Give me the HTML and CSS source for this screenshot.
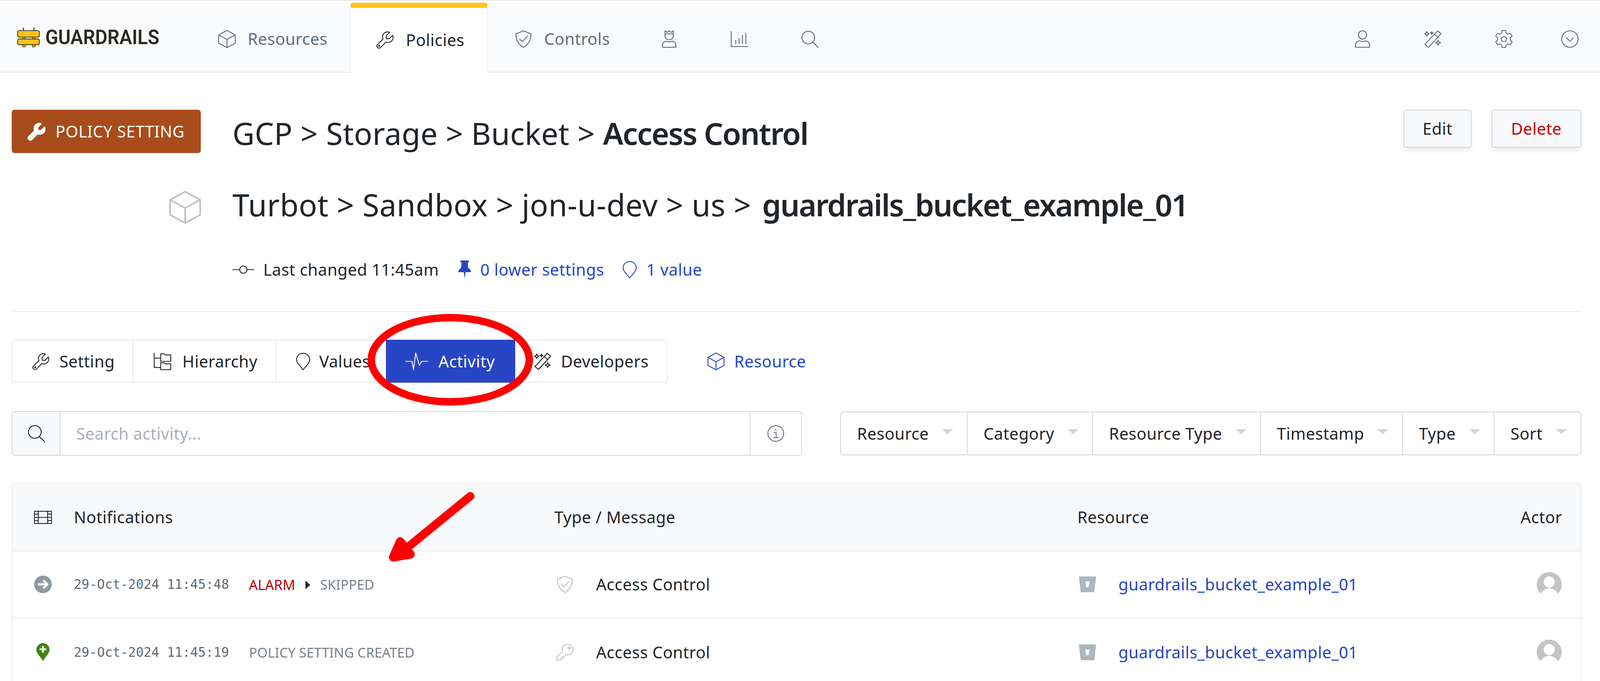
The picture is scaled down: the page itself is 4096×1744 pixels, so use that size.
FILE: index.html
```html
<!DOCTYPE html>
<html lang="en">
<head>
<meta charset="utf-8">
<title>Guardrails - Policy Setting</title>
<link rel="stylesheet" href="styles.css">
</head>
<body>
<svg class="defs" aria-hidden="true">
  <symbol id="i-cube" viewBox="0 0 48 48"><path d="M24 1 46 13V35L24 47 2 35V13ZM2 13 24 25 46 13M24 25V47"/></symbol>
  <symbol id="i-wrench" viewBox="0 0 48 48"><path d="M44 12 35 21H27V13L36 4C29 1 21 4 18 11C16.5 15 17 19 18 22L4 36C1 39 1 42 3.5 44.5C6 47 9.5 47 12 44.5L26 30C29 31 33 31.5 37 30C44 27 47 19 44 12Z"/><circle cx="8" cy="40" r="1.5"/></symbol>
  <symbol id="i-shield" viewBox="0 0 48 48"><path d="M24 2 44 10C44 24 40 38 24 46C8 38 4 24 4 10ZM14 24 21 31 35 16"/></symbol>
  <symbol id="i-crown" viewBox="0 0 48 48"><path d="M13 2 18.500 6 24 2 29.500 6 35 2V16C35 22 30 26 24 26C18 26 13 22 13 16ZM13 10H35M6 46V41C6 34 11 30 16 30C20 32 28 32 32 30C37 30 42 34 42 41V46Z"/></symbol>
  <symbol id="i-chart" viewBox="0 0 48 48"><path d="M2 4V44H47M14 28V37M23 22V37M32 14V37M41 8V37"/></symbol>
  <symbol id="i-search" viewBox="0 0 48 48"><circle cx="20" cy="20" r="17"/><path d="M32 32 46 46"/></symbol>
  <symbol id="i-user" viewBox="0 0 48 48"><circle cx="24" cy="13" r="11"/><path d="M5 46V41C5 33 11 29 17 29C21 31 27 31 31 29C37 29 43 33 43 41V46Z"/></symbol>
  <symbol id="i-wand" viewBox="0 0 48 48"><path d="M37 2 46 10 13 46 3 38ZM29 11 38 20M8 4 10 8 14 10 10 12 8 16 6 12 2 10 6 8ZM21 4 22 7 25 8 22 9 21 12 20 9 17 8 20 7ZM38 27 40 32 45 34 40 36 38 41 36 36 31 34 36 32Z"/></symbol>
  <symbol id="i-gear" viewBox="0 0 48 48"><path d="M19.200 1.500H28.800L29.800 8 34.900 11 41.100 8.600 45.900 16.900 40.700 21V27L45.900 31.100 41.100 39.400 34.900 37 29.800 40 28.800 46.500H19.200L18.200 40 13.100 37 6.900 39.400 2.100 31.100 7.300 27V21L2.100 16.900 6.900 8.600 13.100 11 18.200 8Z"/><circle cx="24" cy="24" r="7"/></symbol>
  <symbol id="i-chevron" viewBox="0 0 48 48"><circle cx="24" cy="24" r="22"/><path d="M15 21 24 30 33 21"/></symbol>
  <symbol id="i-commit" viewBox="0 0 60 48"><circle cx="30" cy="24" r="10"/><path d="M0 24H20M40 24H60"/></symbol>
  <symbol id="i-marker" viewBox="0 0 40 48"><path d="M20 2C9 2 2 10 2 19C2 29 14 38 20 47C26 38 38 29 38 19C38 10 31 2 20 2Z"/></symbol>
  <symbol id="i-tree" viewBox="0 0 50 48"><path d="M2 1V41H20M2 15H20M20 3H30L33 6H48V24H20ZM20 28H30L33 31H48V47H20Z"/></symbol>
  <symbol id="i-pulse" viewBox="0 0 62 48"><path d="M0 24H18L22 47 28 1 38 35 44 24H62"/></symbol>
  <symbol id="i-info" viewBox="0 0 48 48"><circle cx="24" cy="24" r="22"/><path d="M19 21H25V36M18 36H31M24 12V15"/></symbol>
  <symbol id="i-film" viewBox="0 0 50 36"><path d="M1 1H49V35H1ZM12 1V35M38 1V35M12 18H38M1 9H12M1 18H12M1 27H12M38 9H49M38 18H49M38 27H49"/></symbol>
  <symbol id="i-key" viewBox="0 0 50 48"><path d="M33 2C25 2 18 8 18 16C18 18 18.500 20 19 21L3 37V46H14V41H19V36H24L29 30C30 31 32 31 33 31C42 31 48 24 48 16C48 8 41 2 33 2Z"/><circle cx="37" cy="12" r="3"/></symbol>
  <symbol id="i-bucket" viewBox="0 0 48 44"><path d="M0 0H48L43 44H5ZM18 14 20 30H27L30 14Z" fill-rule="evenodd"/></symbol>
  <symbol id="i-avatar" viewBox="0 0 70 68"><circle cx="35" cy="34" r="34" class="av-bg"/><circle cx="35" cy="27" r="15" class="av-fg"/><ellipse cx="35" cy="68" rx="25" ry="24" class="av-fg"/></symbol>
</svg>

<header class="topbar">
  <nav class="nav">
    <a class="brand">
      <svg class="brand-mark" viewBox="0 0 62 54"><path class="bm-line" d="M16 0 18 8M47 0 45 8"/><rect class="bm-post" x="15" y="26" width="7" height="27"/><rect class="bm-post" x="42" y="26" width="7" height="27"/><rect class="bm-bar" x="1" y="8" width="60" height="18" rx="4"/><rect class="bm-bar" x="1" y="31" width="60" height="16" rx="4"/></svg>
      <span class="brand-name">GUARDRAILS</span>
    </a>
    <a class="nav-tab tab-res"><svg class="ico i-nav"><use href="#i-cube"/></svg>Resources</a>
    <a class="nav-tab tab-pol is-active"><svg class="ico i-nav i-dark"><use href="#i-wrench"/></svg>Policies</a>
    <a class="nav-tab tab-con"><svg class="ico i-nav"><use href="#i-shield"/></svg>Controls</a>
    <a class="nav-icon"><svg class="ico i-nav"><use href="#i-crown"/></svg></a>
    <a class="nav-icon"><svg class="ico i-nav"><use href="#i-chart"/></svg></a>
    <a class="nav-icon"><svg class="ico i-nav"><use href="#i-search"/></svg></a>
    <div class="nav-right">
      <svg class="ico i-nav"><use href="#i-user"/></svg>
      <svg class="ico i-nav nudge-wand"><use href="#i-wand"/></svg>
      <svg class="ico i-nav nudge-gear"><use href="#i-gear"/></svg>
      <svg class="ico i-nav nudge-chev"><use href="#i-chevron"/></svg>
    </div>
  </nav>
</header>

<main class="main">
  <section class="head-row">
    <div class="badge"><svg class="ico i-badge"><use href="#i-wrench"/></svg>POLICY SETTING</div>
    <h1 class="title">GCP &gt; Storage &gt; Bucket &gt; <b>Access Control</b></h1>
    <div class="actions">
      <button class="btn btn-edit">Edit</button>
      <button class="btn btn-del">Delete</button>
    </div>
  </section>
  <section class="res-row">
    <svg class="ico i-cube-lg"><use href="#i-cube"/></svg>
    <h1 class="title">Turbot &gt; Sandbox &gt; jon-u-dev &gt; us &gt; <b>guardrails_bucket_example_01</b></h1>
  </section>
  <section class="meta-row">
    <span class="meta"><svg class="ico i-commit"><use href="#i-commit"/></svg>Last changed 11:45am</span>
    <a class="meta link"><svg class="i-pin" viewBox="0 0 35 49"><path d="M6 0H29V5H26L27 20C31 23 35 27 35 32H20L18 49 15 32H0C0 27 4 23 8 20L9 5H6Z"/></svg>0 lower settings</a>
    <a class="meta link"><svg class="ico i-mark-blue"><use href="#i-marker"/></svg>1 value</a>
  </section>
  <hr class="rule">
  <section class="tabs-row">
    <div class="tabs">
      <a class="tab t-set"><svg class="ico i-tab"><use href="#i-wrench"/></svg>Setting</a>
      <a class="tab t-hier"><svg class="ico i-tab"><use href="#i-tree"/></svg>Hierarchy</a>
      <a class="tab t-val"><svg class="ico i-tab-m"><use href="#i-marker"/></svg>Values</a>
      <a class="tab t-act is-on"><svg class="ico i-tab-w"><use href="#i-pulse"/></svg>Activity</a>
      <a class="tab t-dev"><svg class="ico i-tab"><use href="#i-wand"/></svg>Developers</a>
    </div>
    <a class="res-link"><svg class="ico i-tab i-blue"><use href="#i-cube"/></svg>Resource</a>
  </section>
  <section class="filter-row">
    <div class="search">
      <span class="search-pre"><svg class="ico i-s"><use href="#i-search"/></svg></span>
      <input class="search-input" placeholder="Search activity...">
      <span class="search-post"><svg class="ico i-info"><use href="#i-info"/></svg></span>
    </div>
    <div class="filters">
      <span class="filter">Resource<i class="caret"></i></span>
      <span class="filter">Category<i class="caret"></i></span>
      <span class="filter">Resource Type<i class="caret"></i></span>
      <span class="filter">Timestamp<i class="caret"></i></span>
      <span class="filter">Type<i class="caret"></i></span>
      <span class="filter">Sort<i class="caret"></i></span>
    </div>
  </section>
  <section class="table">
    <div class="row row-head">
      <div class="cell"><svg class="ico i-film"><use href="#i-film"/></svg>Notifications</div>
      <div class="cell">Type / Message</div>
      <div class="cell">Resource</div>
      <div class="cell cell-end">Actor</div>
    </div>
    <div class="row">
      <div class="cell">
        <svg class="i-state" viewBox="0 0 48 48"><circle cx="24" cy="24" r="24" class="st-gray"/><path class="st-arrow" d="M10 24H35M25 13 36 24 25 35"/></svg>
        <span class="stamp">29-Oct-2024 11:45:48</span>
        <span class="status st-alarm">ALARM</span><i class="tri"></i><span class="status">SKIPPED</span>
      </div>
      <div class="cell"><svg class="ico i-type"><use href="#i-shield"/></svg><span>Access Control</span></div>
      <div class="cell"><svg class="i-bucket"><use href="#i-bucket"/></svg><a class="link">guardrails_bucket_example_01</a></div>
      <div class="cell cell-end"><svg class="i-avatar"><use href="#i-avatar"/></svg></div>
    </div>
    <div class="row row-low">
      <div class="cell">
        <svg class="i-state i-state-pin" viewBox="0 0 36 49"><path class="st-green" d="M18 0C8 0 0 8 0 18C0 28 12 38 18 49C24 38 36 28 36 18C36 8 28 0 18 0Z"/><path class="st-plus" d="M18 8V26M9 17H27"/></svg>
        <span class="stamp">29-Oct-2024 11:45:19</span>
        <span class="status">POLICY SETTING CREATED</span>
      </div>
      <div class="cell"><svg class="ico i-type"><use href="#i-key"/></svg><span>Access Control</span></div>
      <div class="cell"><svg class="i-bucket"><use href="#i-bucket"/></svg><a class="link">guardrails_bucket_example_01</a></div>
      <div class="cell cell-end"><svg class="i-avatar"><use href="#i-avatar"/></svg></div>
    </div>
  </section>
</main>

<svg class="annotations" viewBox="0 0 4406 1876" aria-hidden="true">
  <ellipse class="an-ring" cx="1240" cy="991" rx="217.500" ry="116"/>
  <path class="an-shaft" d="M1295 1367 1110 1518"/>
  <path class="an-head" d="M1102 1492 1083 1535 1130 1527Z"/>
</svg>
</body>
</html>
```
FILE: styles.css
```css
* { box-sizing: border-box; }
html, body { margin: 0; padding: 0; }
body {
  position: relative;
  width: 4096px;
  height: 1744px;
  overflow: hidden;
  background: #fff;
  color: #212529;
  font-family: "Noto Sans", "Open Sans", sans-serif;
  font-size: 41.6px;
  line-height: 1.4;
  letter-spacing: .5px;
  border-top: 3px solid #eeeeee;
}
a { color: inherit; text-decoration: none; }
.defs { position: absolute; width: 0; height: 0; }

.ico { fill: none; stroke: currentColor; stroke-width: 2.4; stroke-linejoin: round; stroke-linecap: round; flex: none; overflow: visible; }

/* top bar */
.topbar { padding-top: 4px; }
.nav {
  display: flex;
  height: 179px;
  background: #f9fafc;
  border-bottom: 2px solid #e1e5ea;
  color: #646e78;
}
.brand { width: 495px; padding: 64px 0 0 44px; display: flex; align-items: flex-start; }
.brand-mark { width: 58px; height: 50px; flex: none; }
.bm-bar { fill: #fdc31b; stroke: #2a2820; stroke-width: 2; }
.bm-post { fill: #fdc31b; stroke: #2a2820; stroke-width: 1.5; }
.bm-line { stroke: #2a2820; stroke-width: 2.5; fill: none; }
.brand-name {
  margin: 0 0 0 14px;
  font-family: Roboto, sans-serif;
  font-weight: 600;
  font-size: 51px;
  line-height: 50px;
  letter-spacing: 0;
  color: #2a2820;
  transform: scaleX(.95);
  transform-origin: left center;
  white-space: nowrap;
}
.nav-tab { display: flex; align-items: center; gap: 30px; padding: 8px 0 0 63px; white-space: nowrap; }
.i-nav { width: 46px; height: 46px; }
.i-dark { color: #212529; }
.tab-res { width: 402px; }
.tab-pol { width: 351px; padding-left: 65px; }
.tab-con { width: 375px; padding-left: 69px; }
.is-active {
  background: #fff;
  color: #212529;
  height: 181px;
  border: 1px solid #e1e5ea;
  border-width: 0 1px;
  border-top: 13px solid #fdc31b;
  border-radius: 6px 6px 0 0;
  padding-top: 0;
  padding-bottom: 4px;
}
.nav-icon { width: 180px; display: flex; align-items: center; justify-content: center; padding-top: 8px; }
.nav-right { margin-left: auto; display: flex; align-items: center; gap: 131px; padding: 8px 54px 0 0; }
.nudge-wand { margin-left: 3px; }
.nudge-gear { margin-left: 5px; }
.nudge-chev { margin-left: -8px; }

/* heading */
.main { padding: 0 48px 0 30px; }
.head-row { display: flex; align-items: flex-start; height: 111px; margin-top: 95px; }
.badge {
  width: 484px;
  height: 111px;
  flex: none;
  display: flex;
  align-items: center;
  padding-left: 40px;
  gap: 24px;
  background: #a84c1c;
  color: #fff;
  border-radius: 7px;
}
.i-badge { width: 48px; height: 48px; fill: #fff; stroke: #fff; }
.title { margin: 0; font-size: 78px; font-weight: 400; line-height: 111px; white-space: nowrap; }
.title b { font-weight: 600; letter-spacing: -2.2px; }
.head-row .title { margin: 5px 0 0 81px; letter-spacing: .2px; }
.actions { margin-left: auto; display: flex; gap: 51px; }
.btn {
  height: 97px;
  background: #f8f9fb;
  border: 2px solid #d1d5db;
  border-radius: 7px;
  box-shadow: 0 8px 12px rgba(0, 0, 0, .08);
  font: inherit;
  letter-spacing: inherit;
  color: #212529;
  padding: 0;
}
.btn-edit { width: 174px; }
.btn-del { width: 230px; color: #c00000; }

.res-row { display: flex; align-items: center; height: 111px; margin-top: 77px; padding-left: 402px; }
.res-row b { margin-left: 7px; letter-spacing: -2.5px; }
.i-cube-lg { width: 84px; height: 84px; color: #bcc3c9; margin: 12px 79px 0 0; }
.meta-row { display: flex; align-items: center; margin-top: 80px; padding-left: 565px; height: 60px; gap: 46px; }
.meta { display: flex; align-items: center; white-space: nowrap; }
.i-commit { width: 56px; height: 45px; margin-right: 23px; }
.link { color: #2745c4; }
.i-pin { width: 33px; height: 46px; fill: #2745c4; margin: 0 24px 0 3px; }
.i-mark-blue { width: 38px; height: 45px; margin-right: 24px; }
.rule { border: 0; border-top: 2px solid #e8eaed; margin: 77px 0 0; }

/* tabs */
.tabs-row { display: flex; align-items: center; margin-top: 71px; height: 110px; }
.tabs { display: flex; height: 110px; border: 2px solid #e5e7eb; border-radius: 8px; }
.tab { display: flex; align-items: center; gap: 24px; padding: 0 50px; border-left: 2px solid #e5e7eb; white-space: nowrap; }
.tab:first-child { border-left: 0; }
.t-set { padding-right: 45px; }
.t-hier { padding: 0 46px 0 52px; gap: 28px; }
.t-val { padding-right: 40px; gap: 22px; }
.t-act { gap: 27px; padding-right: 52px; }
.t-dev { padding: 0 47px; }
.is-on { background: #2845c5; color: #fff; border: 0; margin: -2px 0; }
.is-on + .tab { border-left: 0; }
.i-tab { width: 46px; height: 45px; }
.i-tab-m { width: 38px; height: 45px; }
.i-tab-w { width: 58px; height: 45px; color: #fff; }
.i-blue { color: #2745c4; }
.res-link { display: flex; align-items: center; gap: 24px; margin-left: 100px; color: #2745c4; }

/* filters */
.filter-row { display: flex; justify-content: space-between; align-items: center; margin-top: 73px; height: 114px; }
.search { display: flex; width: 2023px; height: 114px; border: 2px solid #d1d5db; border-radius: 8px; overflow: hidden; }
.search-pre { width: 123px; flex: none; display: flex; align-items: center; justify-content: center; background: #f8f9fb; border-right: 2px solid #d1d5db; }
.i-s { width: 46px; height: 46px; color: #212529; }
.search-input { flex: 1; border: 0; outline: 0; padding: 0 40px; font: inherit; letter-spacing: inherit; color: #212529; min-width: 0; }
.search-input::placeholder { color: #a8afb8; opacity: 1; }
.search-post { width: 132px; flex: none; display: flex; align-items: center; justify-content: center; border-left: 2px solid #d1d5db; }
.i-info { width: 44px; height: 44px; color: #646e78; }
.filters { display: flex; height: 112px; border: 2px solid #d1d5db; border-radius: 8px; }
.filter { display: flex; align-items: center; padding: 0 35px 0 41px; border-left: 2px solid #d1d5db; white-space: nowrap; }
.filter:first-child { border-left: 0; }
.caret { width: 0; height: 0; margin-left: 34px; border-style: solid; border-width: 13px 14px 0; border-color: #d1d5db transparent transparent; transform: translateY(-5px); }

/* table */
.table { margin-top: 70px; border: 2px solid #e8eaed; border-bottom: 0; border-radius: 8px 8px 0 0; }
.row {
  display: grid;
  grid-template-columns: 1332px 1339px 1fr 200px;
  align-items: center;
  height: 171px;
  padding: 0 47px 0 55px;
  border-top: 2px solid #e8eaed;
}
.row-head { height: 171px; background: #f8f9fb; border-top: 0; border-radius: 8px 8px 0 0; }
.row-low { padding-top: 5px; }
.cell { display: flex; align-items: center; white-space: nowrap; }
.cell-end { justify-content: flex-end; }
.i-film { width: 46px; height: 34px; margin-right: 56px; }
.i-state { width: 46px; height: 45px; margin-right: 56px; flex: none; }
.i-state-pin { height: 46px; }
.st-gray { fill: #8f98a1; }
.st-arrow { fill: none; stroke: #fff; stroke-width: 6; stroke-linejoin: round; }
.st-green { fill: #3f8511; }
.st-plus { fill: none; stroke: #fff; stroke-width: 5; }
.stamp { font-family: "DejaVu Sans Mono", "Liberation Mono", monospace; font-size: 33px; letter-spacing: 0; color: #5f6973; margin: 2px 51px 0 0; }
.status { font-size: 34.6px; letter-spacing: 0; color: #7a838c; margin-top: 2px; }
.st-alarm { color: #c00000; font-size: 35.5px; }
.tri { width: 0; height: 0; margin: 2px 26px 0; border-style: solid; border-width: 11px 0 11px 12px; border-color: transparent transparent transparent #212529; }
.i-type { width: 46px; height: 45px; color: #b8bfc6; margin: 0 57px 0 4px; }
.i-bucket { width: 44px; height: 41px; fill: #adb5bd; margin: 0 57px 0 4px; flex: none; }
.i-avatar { width: 66px; height: 64px; }
.av-bg { fill: #c4c4c4; }
.av-fg { fill: #fff; }

/* hand-drawn annotations */
.annotations { position: absolute; left: 0; top: -3px; width: 4096px; height: 1744px; pointer-events: none; }
.an-ring { fill: none; stroke: #ff0000; stroke-width: 20.500; }
.an-shaft { fill: none; stroke: #ff0000; stroke-width: 23; stroke-linecap: round; }
.an-head { fill: #ff0000; stroke: #ff0000; stroke-width: 24; stroke-linejoin: round; }
```
